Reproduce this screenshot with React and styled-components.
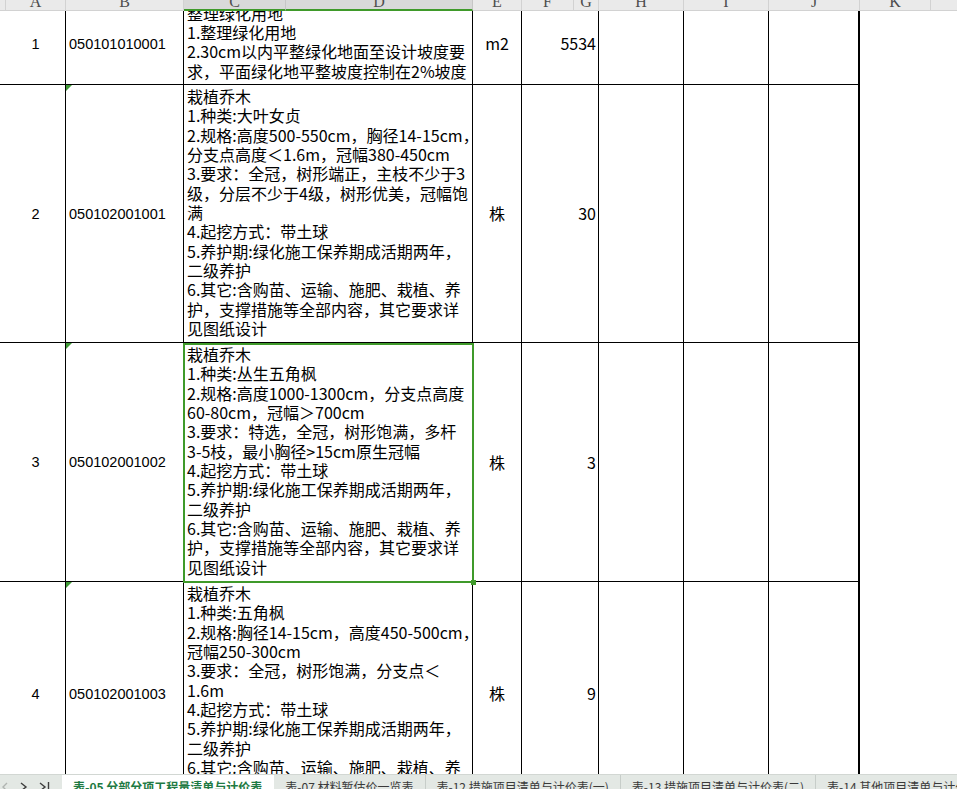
import React from 'react';
import styled, { createGlobalStyle } from 'styled-components';

const GREEN = '#3f9a2a';

const GlobalStyle = createGlobalStyle`
  html, body {
    margin: 0;
    padding: 0;
    background: #fff;
  }
  body {
    overflow: hidden;
  }
`;

const Page = styled.div`
  width: 957px;
  height: 789px;
  display: flex;
  flex-direction: column;
  overflow: hidden;
  background: #fff;
`;

const Sheet = styled.div`
  flex: 1;
  min-height: 0;
  overflow: hidden;
  display: grid;
  grid-template-columns: 6px 60px 118px 102px 187px 49px 52px 25px 85px 85px 91px 71px 85px;
  grid-template-rows: 11px 74px 258px 239px 224px;
  align-content: start;
`;

const HeadCell = styled.div`
  box-sizing: border-box;
  overflow: hidden;
  text-align: center;
  background: ${(p) => (p.$active ? '#d9d9d9' : '#eaeaea')};
  border-right: 1px solid ${(p) => (p.$active ? '#c6c6c6' : '#d2d2d2')};
  border-bottom: ${(p) => (p.$active ? `2px solid ${GREEN}` : '1px solid #d2d2d2')};
  font: 16px/16px 'Liberation Serif', serif;
  color: #4e4e4e;

  span {
    display: block;
    margin-top: -6px;
  }
`;

const Cell = styled.div`
  position: relative;
  box-sizing: border-box;
  grid-column: span ${(p) => p.$span || 1};
  display: flex;
  align-items: center;
  justify-content: ${(p) =>
    p.$align === 'right' ? 'flex-end' : p.$align === 'left' ? 'flex-start' : 'center'};
  padding: 0 ${(p) => (p.$align === 'right' ? '2px' : '3px')}
    ${(p) => (p.$lift ? '8px' : '0')} 3px;
  border-right: ${(p) => (p.$edge ? '2px' : '1px')} solid #000;
  border-bottom: 1px solid #000;
  white-space: nowrap;
  overflow: hidden;
  color: #000;
  font: ${(p) =>
    p.$latin
      ? "14.5px/18px 'Liberation Sans', Arial, sans-serif"
      : "16px/19px 'Noto Sans CJK SC', sans-serif"};

  ${(p) =>
    p.$flag &&
    `
    &::before {
      content: '';
      position: absolute;
      top: 0;
      left: 0;
      border-top: 6px solid #3f9a36;
      border-right: 6px solid transparent;
    }
  `}
`;

const Lead = styled.div`
  border-bottom: 1px solid #000;
`;

const Blank = styled.div`
  background: #fff;
`;

const SpecCell = styled.div`
  position: relative;
  box-sizing: border-box;
  grid-column: span 2;
  border-right: 1px solid #000;
  border-bottom: 1px solid #000;
  min-height: 0;

  ${(p) =>
    p.$selected &&
    `
    &::after {
      content: '';
      position: absolute;
      top: 0;
      left: -1px;
      right: -2px;
      bottom: -2px;
      border: 2px solid ${GREEN};
      z-index: 2;
      pointer-events: none;
    }
    &::before {
      content: '';
      position: absolute;
      right: -4px;
      bottom: -4px;
      width: 5px;
      height: 5px;
      background: ${GREEN};
      z-index: 3;
    }
  `}
`;

const Lines = styled.div`
  box-sizing: border-box;
  height: 100%;
  overflow: hidden;
  display: flex;
  flex-direction: column;
  justify-content: ${(p) => (p.$bottom ? 'flex-end' : 'flex-start')};
  padding: ${(p) => (p.$bottom ? '0 3px 3px' : '2px 3px 0')};
  font: 16px/19.33px 'Noto Sans CJK SC', sans-serif;
  color: #000;
`;

const Line = styled.div`
  flex: none;
  white-space: nowrap;
`;

const TabBar = styled.div`
  flex: none;
  height: 14px;
  display: flex;
  overflow: hidden;
  background: #e3e8e4;
  border-top: 1px solid #d2d7d3;
  font: 12px/16px 'Noto Sans CJK SC', sans-serif;
`;

const Nav = styled.div`
  flex: none;
  width: 62px;
  display: flex;
  align-items: flex-start;
  gap: 10px;
  padding: 7px 0 0 1px;
  box-sizing: border-box;
`;

const NavIcon = styled.svg`
  flex: none;
  display: block;
  stroke: ${(p) => (p.$dim ? '#b0b4b1' : '#3e3e3e')};
  stroke-width: 1.4;
  fill: none;
`;

const Tab = styled.div`
  flex: none;
  padding: 4px 11px 0;
  white-space: nowrap;
  border-right: 1px solid ${(p) => (p.$active ? 'transparent' : '#c7cdc9')};
  background: ${(p) => (p.$active ? '#fff' : 'transparent')};
  color: ${(p) => (p.$active ? '#1e7a43' : '#3a3a3a')};
  font-weight: ${(p) => (p.$active ? 600 : 400)};
`;

const columns = [
  { key: '' },
  { key: 'A' },
  { key: 'B' },
  { key: 'C', active: true },
  { key: 'D', active: true },
  { key: 'E' },
  { key: 'F' },
  { key: 'G' },
  { key: 'H' },
  { key: 'I' },
  { key: 'J' },
  { key: 'K' },
  { key: 'L' },
];

const rows = [
  {
    no: '1',
    code: '050101010001',
    unit: 'm2',
    qty: '5534',
    bottom: true,
    lift: true,
    lines: [
      '整理绿化用地',
      '1.整理绿化用地',
      '2.30cm以内平整绿化地面至设计坡度要',
      '求，平面绿化地平整坡度控制在2%坡度',
    ],
  },
  {
    no: '2',
    code: '050102001001',
    unit: '株',
    qty: '30',
    flag: true,
    lines: [
      '栽植乔木',
      '1.种类:大叶女贞',
      '2.规格:高度500-550cm，胸径14-15cm，',
      '分支点高度＜1.6m，冠幅380-450cm',
      '3.要求：全冠，树形端正，主枝不少于3',
      '级，分层不少于4级，树形优美，冠幅饱',
      '满',
      '4.起挖方式：带土球',
      '5.养护期:绿化施工保养期成活期两年，',
      '二级养护',
      '6.其它:含购苗、运输、施肥、栽植、养',
      '护，支撑措施等全部内容，其它要求详',
      '见图纸设计',
    ],
  },
  {
    no: '3',
    code: '050102001002',
    unit: '株',
    qty: '3',
    flag: true,
    selected: true,
    lines: [
      '栽植乔木',
      '1.种类:丛生五角枫',
      '2.规格:高度1000-1300cm，分支点高度',
      '60-80cm，冠幅＞700cm',
      '3.要求：特选，全冠，树形饱满，多杆',
      '3-5枝，最小胸径>15cm原生冠幅',
      '4.起挖方式：带土球',
      '5.养护期:绿化施工保养期成活期两年，',
      '二级养护',
      '6.其它:含购苗、运输、施肥、栽植、养',
      '护，支撑措施等全部内容，其它要求详',
      '见图纸设计',
    ],
  },
  {
    no: '4',
    code: '050102001003',
    unit: '株',
    qty: '9',
    flag: true,
    lines: [
      '栽植乔木',
      '1.种类:五角枫',
      '2.规格:胸径14-15cm，高度450-500cm，',
      '冠幅250-300cm',
      '3.要求：全冠，树形饱满，分支点＜',
      '1.6m',
      '4.起挖方式：带土球',
      '5.养护期:绿化施工保养期成活期两年，',
      '二级养护',
      '6.其它:含购苗、运输、施肥、栽植、养',
      '护，支撑措施等全部内容，其它要求详',
      '见图纸设计',
    ],
  },
];

const tabs = [
  { label: '表-05 分部分项工程量清单与计价表', active: true },
  { label: '表-07 材料暂估价一览表' },
  { label: '表-12 措施项目清单与计价表(一)' },
  { label: '表-13 措施项目清单与计价表(二)' },
  { label: '表-14 其他项目清单与计价汇总表' },
];

const SheetRow = ({ row }) => (
  <>
    <Lead />
    <Cell $latin $lift={row.lift}>{row.no}</Cell>
    <Cell $latin $align="left" $lift={row.lift} $flag={row.flag}>
      {row.code}
    </Cell>
    <SpecCell $selected={row.selected}>
      <Lines $bottom={row.bottom}>
        {row.lines.map((text, i) => (
          <Line key={i}>{text}</Line>
        ))}
      </Lines>
    </SpecCell>
    <Cell $lift={row.lift}>{row.unit}</Cell>
    <Cell $span={2} $align="right" $lift={row.lift}>
      {row.qty}
    </Cell>
    <Cell />
    <Cell />
    <Cell $edge />
    <Blank />
    <Blank />
  </>
);

export default function App() {
  return (
    <Page>
      <GlobalStyle />
      <Sheet>
        {columns.map((col, i) => (
          <HeadCell key={col.key || i} $active={col.active}>
            <span>{col.key}</span>
          </HeadCell>
        ))}
        {rows.map((row) => (
          <SheetRow key={row.no} row={row} />
        ))}
      </Sheet>
      <TabBar>
        <Nav>
          <NavIcon $dim width="8" height="10" viewBox="0 0 8 10">
            <path d="M6 1 L2 5 L6 9" />
          </NavIcon>
          <NavIcon width="9" height="10" viewBox="0 0 9 10">
            <path d="M2 1 L7 5 L2 9" />
          </NavIcon>
          <NavIcon width="12" height="10" viewBox="0 0 12 10">
            <path d="M2 1 L7 5 L2 9" />
            <path d="M10.5 0 L10.5 10" />
          </NavIcon>
        </Nav>
        {tabs.map((tab) => (
          <Tab key={tab.label} $active={tab.active}>
            {tab.label}
          </Tab>
        ))}
      </TabBar>
    </Page>
  );
}
